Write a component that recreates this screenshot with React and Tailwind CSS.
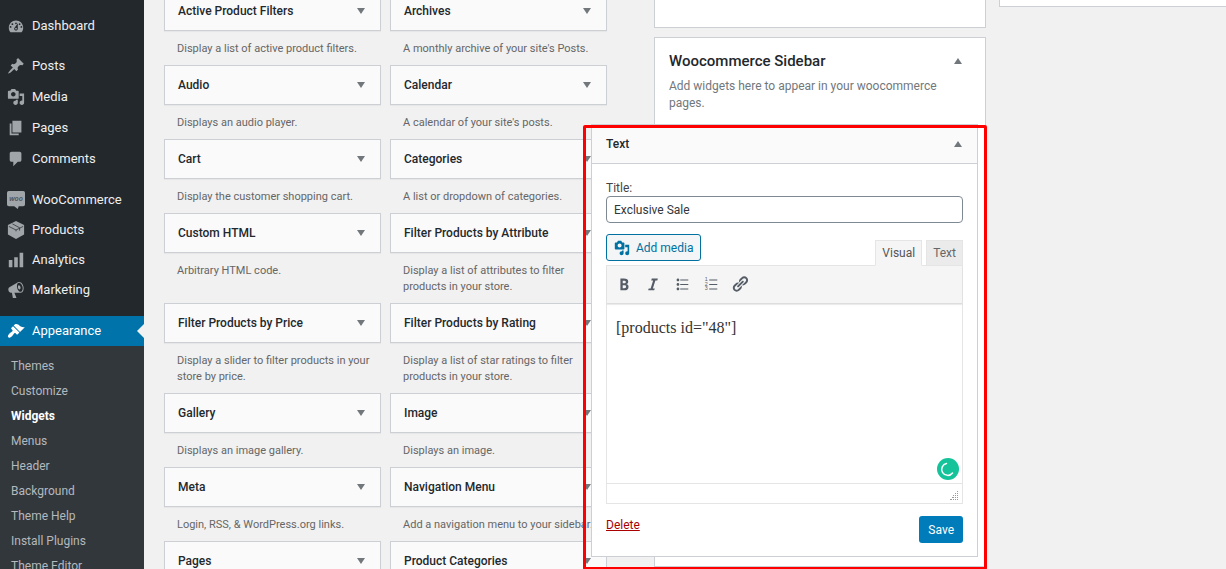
import React, { useState } from "react";

// Icons are drawn on a 20x20 grid
const ICONS = {
  dashboard:
    "M3.76 17h12.48c1.1-1.37 1.76-3.11 1.76-5 0-4.42-3.58-8-8-8s-8 3.58-8 8c0 1.89.66 3.63 1.76 5zM10 6c.55 0 1 .45 1 1s-.45 1-1 1-1-.45-1-1 .45-1 1-1zM6 7c.55 0 1 .45 1 1s-.45 1-1 1-1-.45-1-1 .45-1 1-1zm8 0c.55 0 1 .45 1 1s-.45 1-1 1-1-.45-1-1 .45-1 1-1zm-5.37 4.55L12 7v6c0 1.1-.9 2-2 2s-2-.9-2-2c0-.57.24-1.08.63-1.45zM4 10c.55 0 1 .45 1 1s-.45 1-1 1-1-.45-1-1 .45-1 1-1zm12 0c.55 0 1 .45 1 1s-.45 1-1 1-1-.45-1-1 .45-1 1-1zm-5 3c0-.55-.45-1-1-1s-1 .45-1 1 .45 1 1 1 1-.45 1-1z",
  pin: "M10.44 3.02l1.82-1.82 6.36 6.35-1.83 1.82c-1.05-.68-2.48-.57-3.41.36l-.75.75c-.92.93-1.04 2.35-.35 3.41l-1.83 1.82-2.41-2.41-2.8 2.79c-.42.42-3.38 2.71-3.8 2.29s1.86-3.39 2.28-3.81l2.79-2.79L4.1 9.36l1.83-1.82c1.05.69 2.48.57 3.4-.36l.75-.75c.93-.92 1.05-2.35.36-3.41z",
  media:
    "M13 11V4c0-.55-.45-1-1-1h-1.67L9 1H5L3.67 3H2c-.55 0-1 .45-1 1v7c0 .55.45 1 1 1h10c.55 0 1-.45 1-1zM7 4.5c1.38 0 2.5 1.12 2.5 2.5S8.38 9.5 7 9.5 4.5 8.38 4.5 7 5.62 4.5 7 4.5zM14 6h5v10.5c0 1.38-1.12 2.5-2.5 2.5S14 17.88 14 16.5s1.12-2.5 2.5-2.5c.17 0 .34.02.5.05V9h-3V6zm-4 8.05V13h2v3.5c0 1.38-1.12 2.5-2.5 2.5S7 17.88 7 16.5 8.12 14 9.5 14c.17 0 .34.02.5.05z",
  page: "M6 15V2h10v13H6zm-1 1h8v2H3V5h2v11z",
  comment:
    "M5 2h9c1.1 0 2 .9 2 2v7c0 1.1-.9 2-2 2h-2l-5 5v-5H5c-1.1 0-2-.9-2-2V4c0-1.1.9-2 2-2z",
  chart: "M18 18V2h-4v16h4zm-6 0V7H8v11h4zm-6 0v-8H2v8h4z",
  megaphone:
    "M18.15 5.94c.46 1.62.38 3.22-.02 4.48-.42 1.28-1.26 2.18-2.3 2.48-.16.06-.26.06-.4.06-.06.02-.12.02-.18.02-.06.02-.14.02-.22.02h-6.8l2.22 5.5c.02.14-.06.26-.14.34-.08.1-.24.16-.34.16H6.95c-.1 0-.26-.06-.34-.16-.08-.08-.16-.2-.14-.34l-1-5.5H4.25l-.02-.02c-.5.06-1.08-.18-1.54-.62s-.88-1.08-1.06-1.88c-.24-.8-.2-1.56-.02-2.2.18-.62.58-1.08 1.06-1.3l.02-.02 9-5.4c.1-.06.18-.1.24-.16.06-.04.14-.08.24-.12.16-.08.28-.12.5-.18 1.04-.3 2.24.1 3.22.98s1.84 2.24 2.26 3.86zm-2.58 5.98h-.02c.4-.1.74-.34 1.04-.7.58-.7.86-1.76.86-3.04 0-.64-.1-1.3-.28-1.98-.34-1.36-1.02-2.5-1.78-3.24s-1.68-1.1-2.46-.88c-.82.22-1.4.96-1.7 2-.32 1.04-.28 2.36.06 3.72.38 1.36 1 2.5 1.8 3.24.78.74 1.62 1.1 2.48.88zm-2.54-7.08c.22-.04.42-.02.62.04.38.16.76.48 1.02 1s.42 1.2.42 1.78c0 .3-.04.56-.12.8-.18.48-.44.84-.86.94-.34.1-.8-.06-1.14-.4s-.64-.86-.78-1.5c-.18-.62-.12-1.24.02-1.72s.48-.84.82-.94z",
  brush:
    "M14.48 11.06L7.41 3.99l1.5-1.5c.5-.56 2.3-.47 3.51.32 1.21.8 1.43 1.28 2.91 2.1 1.18.64 2.45 1.26 4.45.85zm-.71.71L6.7 4.7 4.93 6.47c-.39.39-.39 1.02 0 1.41l1.06 1.06c.39.39.39 1.03 0 1.42-.6.6-1.43 1.11-2.21 1.69-.35.26-.7.53-1.01.84C1.43 14.23.4 16.08 1.4 17.07c.99 1 2.84-.03 4.18-1.36.31-.31.58-.66.85-1.02.57-.78 1.08-1.61 1.69-2.21.39-.39 1.02-.39 1.41 0l1.06 1.06c.39.39 1.02.39 1.41 0z",
  bold: "M6 4v13h4.54c1.37 0 2.46-.33 3.26-1 .8-.66 1.2-1.58 1.2-2.77 0-.84-.17-1.51-.51-2.01s-.9-.85-1.67-1.03v-.09c.57-.1 1.02-.4 1.36-.9s.51-1.13.51-1.91c0-1.14-.39-1.98-1.17-2.5C12.75 4.26 11.5 4 9.78 4H6zm2.57 5.15V6.26h1.36c.73 0 1.27.11 1.61.32.34.22.51.58.51 1.07 0 .54-.16.92-.47 1.15s-.82.35-1.51.35h-1.5zm0 2.19h1.6c1.44 0 2.16.53 2.16 1.61 0 .6-.17 1.05-.51 1.34s-.86.43-1.57.43H8.57v-3.38z",
  italic: "M14.78 6h-2.13l-2.8 9h2.12l-.62 2H4.6l.62-2h2.14l2.8-9H8.03l.62-2h6.75z",
  bullets:
    "M5.5 7C4.67 7 4 6.33 4 5.5 4 4.68 4.67 4 5.5 4 6.32 4 7 4.68 7 5.5 7 6.33 6.32 7 5.5 7zM8 5h9v1H8V5zm-2.500 7c-.83 0-1.500-.67-1.500-1.500C4 9.680 4.670 9 5.500 9c.82 0 1.500.68 1.500 1.500 0 .83-.68 1.500-1.500 1.500zM8 10h9v1H8v-1zm-2.500 7c-.83 0-1.500-.67-1.500-1.500 0-.82.67-1.500 1.500-1.500.82 0 1.500.68 1.500 1.500 0 .83-.68 1.500-1.500 1.500zM8 15h9v1H8v-1z",
  link: "M17.74 2.76c1.68 1.69 1.68 4.41 0 6.1l-1.53 1.52c-1.12 1.12-2.7 1.47-4.14 1.09l2.62-2.61.76-.77.76-.76c.84-.84.84-2.2 0-3.04-.84-.85-2.2-.85-3.04 0l-.77.76-3.38 3.38c-.37-1.44-.02-3.02 1.1-4.14l1.52-1.53c1.69-1.68 4.42-1.68 6.1 0zM8.59 13.43l5.34-5.34c.42-.42.42-1.1 0-1.52-.44-.43-1.13-.39-1.53 0l-5.33 5.34c-.42.42-.42 1.1 0 1.52.44.43 1.13.39 1.52 0zm-.76 2.29l4.14-4.15c.38 1.44.03 3.02-1.09 4.14l-1.52 1.53c-1.69 1.68-4.41 1.68-6.1 0-1.68-1.68-1.68-4.42 0-6.1l1.53-1.52c1.12-1.12 2.7-1.47 4.14-1.1l-4.14 4.15c-.85.84-.85 2.2 0 3.05.84.84 2.2.84 3.04 0z",
};

const Icon = ({ name, className = "size-[18px]" }) => (
  <svg viewBox="0 0 20 20" fill="currentColor" className={`shrink-0 ${className}`} aria-hidden="true">
    <path d={ICONS[name]} />
  </svg>
);

const WooIcon = () => (
  <svg viewBox="0 0 20 20" className="size-[18px] shrink-0" aria-hidden="true">
    <path fill="currentColor" d="M2 0h16a2 2 0 0 1 2 2v13a2 2 0 0 1-2 2h-5l-1 3-4-3H2a2 2 0 0 1-2-2V2a2 2 0 0 1 2-2z" />
    <text x="10" y="11" textAnchor="middle" fontSize="8" fontWeight="600" fontStyle="italic" fontFamily="Open Sans, sans-serif" fill="#4a4f54">
      woo
    </text>
  </svg>
);

const BoxIcon = () => (
  <svg viewBox="0 0 20 20" className="size-[18px] shrink-0" aria-hidden="true">
    <path fill="currentColor" d="M10 0l9 4.500v10.500l-9 5-9-5V4.500z" />
    <path fill="none" stroke="#23282d" strokeWidth=".8" d="M2 6l8 4 8-4M6 3.200l8 4.300v3.200M10 10v1.500" />
  </svg>
);

const NumberedIcon = () => (
  <svg viewBox="0 0 20 20" fill="currentColor" className="size-[18px] shrink-0" aria-hidden="true">
    <path d="M8 5h9v1H8zM8 10h9v1H8zM8 15h9v1H8z" />
    <g fontSize="6" fontFamily="Liberation Sans, sans-serif">
      <text x="3" y="7">1</text>
      <text x="3" y="12">2</text>
      <text x="3" y="17">3</text>
    </g>
  </svg>
);

const Arrow = ({ up }) => (
  <svg viewBox="0 0 8 6" className="h-[6px] w-2 shrink-0 fill-[#72777c]" aria-hidden="true">
    <path d={up ? "M0 6l4-6 4 6z" : "M0 0h8L4 6z"} />
  </svg>
);

const CONTENT_MENU = [
  { label: "Posts", icon: <Icon name="pin" /> },
  { label: "Media", icon: <Icon name="media" /> },
  { label: "Pages", icon: <Icon name="page" /> },
  { label: "Comments", icon: <Icon name="comment" /> },
];

const STORE_MENU = [
  { label: "WooCommerce", icon: <WooIcon /> },
  { label: "Products", icon: <BoxIcon /> },
  { label: "Analytics", icon: <Icon name="chart" /> },
  { label: "Marketing", icon: <Icon name="megaphone" /> },
];

const SUBMENU = [
  "Themes",
  "Customize",
  "Widgets",
  "Menus",
  "Header",
  "Background",
  "Theme Help",
  "Install Plugins",
  "Theme Editor",
];

const WIDGETS = [
  ["Active Product Filters", "Display a list of active product filters."],
  ["Archives", "A monthly archive of your site's Posts."],
  ["Audio", "Displays an audio player."],
  ["Calendar", "A calendar of your site's posts."],
  ["Cart", "Display the customer shopping cart."],
  ["Categories", "A list or dropdown of categories."],
  ["Custom HTML", "Arbitrary HTML code."],
  ["Filter Products by Attribute", "Display a list of attributes to filter products in your store."],
  ["Filter Products by Price", "Display a slider to filter products in your store by price."],
  ["Filter Products by Rating", "Display a list of star ratings to filter products in your store."],
  ["Gallery", "Displays an image gallery."],
  ["Image", "Displays an image."],
  ["Meta", "Login, RSS, & WordPress.org links."],
  ["Navigation Menu", "Add a navigation menu to your sidebar."],
  ["Pages", "A list of your site's Pages."],
  ["Product Categories", "A list or dropdown of product categories."],
];

const MenuItem = ({ label, icon }) => (
  <a href="#" className="flex h-[30px] shrink-0 items-center gap-[7px] pl-[7px] text-[13px] text-[#eeeeee]">
    <span className="text-[#a0a5aa]">{icon}</span>
    {label}
  </a>
);

const AdminMenu = () => (
  <nav className="flex w-36 shrink-0 flex-col gap-[10px] bg-[#23282d] pt-[11px]">
    <MenuItem label="Dashboard" icon={<Icon name="dashboard" />} />
    <div className="flex flex-col gap-px">
      {CONTENT_MENU.map((item) => (
        <MenuItem key={item.label} {...item} />
      ))}
    </div>
    <div className="py-px">
      {STORE_MENU.map((item) => (
        <MenuItem key={item.label} {...item} />
      ))}
    </div>
    <div className="flex-1 bg-[#32373c]">
      <a href="#" className="relative flex h-[30px] items-center gap-[7px] bg-[#0073aa] pl-[7px] text-[13px] text-white">
        <Icon name="brush" />
        Appearance
        <span className="absolute right-0 border-y-[7px] border-r-[7px] border-y-transparent border-r-[#f1f1f1]" />
      </a>
      <ul className="pt-2">
        {SUBMENU.map((label) => (
          <li key={label}>
            <a
              href="#"
              className={`block pl-[11px] text-[12px] leading-[25px] ${
                label === "Widgets" ? "font-bold text-white" : "text-[#b4b9be]"
              }`}
            >
              {label}
            </a>
          </li>
        ))}
      </ul>
    </div>
  </nav>
);

const AvailableWidget = ({ title, description }) => (
  <div>
    <button
      type="button"
      className="flex h-10 w-full items-center justify-between border border-[#ccd0d4] bg-[#fafafa] pr-[15px] pl-[13px] text-[12px] font-medium text-[#23282d] shadow-[0_1px_1px_rgba(0,0,0,0.04)]"
    >
      {title}
      <Arrow />
    </button>
    <p className="pt-[10px] pr-1 pb-2 pl-[13px] text-[11px] leading-4 text-[#666666]">{description}</p>
  </div>
);

const ToolbarButton = ({ label, children }) => (
  <button type="button" aria-label={label} className="flex size-[18px] items-center justify-center">
    {children}
  </button>
);

const TextWidget = () => {
  const [title, setTitle] = useState("Exclusive Sale");
  const [content, setContent] = useState('[products id="48"]');

  return (
    <div className="relative z-10 -ml-[72px] border border-[#ccd0d4] bg-white">
      <button
        type="button"
        className="flex h-[39px] w-full items-center justify-between border-b border-[#ccd0d4] bg-[#fafafa] pr-[15px] pl-[14px] text-[12px] font-medium text-[#23282d]"
      >
        Text
        <Arrow up />
      </button>

      <form className="px-[14px] pt-4 pb-[13px]" onSubmit={(e) => e.preventDefault()}>
        <label htmlFor="widget-title" className="block text-[12px] leading-4 text-[#444444]">
          Title:
        </label>
        <input
          id="widget-title"
          type="text"
          value={title}
          onChange={(e) => setTitle(e.target.value)}
          className="block h-[27px] w-full rounded-[4px] border border-[#7e8993] bg-white px-[7px] text-[12px] text-[#32373c]"
        />

        <div className="mt-[11px] flex items-start justify-between">
          <button
            type="button"
            className="flex h-[27px] items-center gap-[6px] rounded-[3px] border border-[#0071a1] bg-[#f3f5f6] px-[7px] text-[12px] text-[#0071a1]"
          >
            <Icon name="media" className="size-4" />
            Add media
          </button>
          <div className="relative z-10 mt-[6px] -mb-px flex gap-1 text-[12px] text-[#555555]">
            <button type="button" className="h-[26px] border border-[#e5e5e5] border-b-[#f5f5f5] bg-[#f5f5f5] px-[6px]">
              Visual
            </button>
            <button type="button" className="h-[26px] border border-[#e5e5e5] bg-[#ebebeb] px-[6px] text-[#666666]">
              Text
            </button>
          </div>
        </div>

        <div className="relative border border-[#e5e5e5]">
          <div className="flex h-[38px] items-center gap-[11px] border-b border-[#dddddd] bg-[#f5f5f5] pb-[2px] pl-2 text-[#555d66] shadow-[0_1px_1px_rgba(0,0,0,0.08)]">
            <ToolbarButton label="Bold">
              <Icon name="bold" />
            </ToolbarButton>
            <ToolbarButton label="Italic">
              <Icon name="italic" />
            </ToolbarButton>
            <ToolbarButton label="Bulleted list">
              <Icon name="bullets" />
            </ToolbarButton>
            <ToolbarButton label="Numbered list">
              <NumberedIcon />
            </ToolbarButton>
            <ToolbarButton label="Insert link">
              <Icon name="link" />
            </ToolbarButton>
          </div>
          <textarea
            aria-label="Content"
            value={content}
            onChange={(e) => setContent(e.target.value)}
            className="block h-[179px] w-full resize-none px-[9px] py-3 font-['Liberation_Serif',serif] text-[16px] leading-6 text-[#333333]"
          />
          <div className="flex h-5 items-end justify-end border-t border-[#e5e5e5] p-[3px]">
            <svg viewBox="0 0 9 9" className="size-[9px] fill-[#999999]" aria-hidden="true">
              <path d="M7 0h1v1H7zM5 2h1v1H5zM7 2h1v1H7zM3 4h1v1H3zM5 4h1v1H5zM7 4h1v1H7zM2 6h1v1H2zM3 6h1v1H3zM5 6h1v1H5zM7 6h1v1H7zM0 8h2v1H0zM3 8h1v1H3zM5 8h1v1H5zM7 8h1v1H7z" />
            </svg>
          </div>
          {/* Grammar checker badge floating over the editor */}
          <svg viewBox="0 0 22 22" className="absolute right-[3px] bottom-[23px] size-[22px]" aria-hidden="true">
            <circle cx="11" cy="11" r="11" fill="#15c39a" />
            <path d="M9.500 5.500a6 6 0 1 0 6 9.500" fill="none" stroke="#ffffff" strokeWidth="1.500" strokeLinecap="round" />
          </svg>
        </div>

        <div className="mt-3 flex items-start justify-between">
          <a href="#" className="text-[12px] leading-[18px] text-[#aa0000] underline">
            Delete
          </a>
          <button type="submit" className="h-[27px] rounded-[3px] bg-[#007cba] px-[9px] text-[12px] text-white">
            Save
          </button>
        </div>
      </form>

      {/* Highlight frame around the open widget */}
      <div className="pointer-events-none absolute top-0 -right-[10px] -bottom-[14px] -left-[9px] rounded-[2px] border-[3px] border-[#ff0000]" />
    </div>
  );
};

export default function App() {
  return (
    <div className="flex h-screen overflow-hidden bg-[#f1f1f1] font-['Roboto','Open_Sans',sans-serif] text-[#444444]">
      <AdminMenu />

      {/* Page content, scrolled partway down the first row */}
      <main className="-mt-[9px] grid flex-1 grid-cols-[477fr_332fr_227fr] items-start gap-[13px] pl-5">
        <section className="mr-[34px] grid grid-cols-2 gap-x-[9px]">
          {WIDGETS.map(([title, description]) => (
            <AvailableWidget key={title} title={title} description={description} />
          ))}
        </section>

        <section className="flex min-w-0 flex-col gap-[9px]">
          <div className="h-[37px] border border-[#ccd0d4] bg-white" />
          <div className="border border-[#ccd0d4] bg-white pr-[7px] pb-[9px] pl-2">
            <div className="pt-[11px] pr-4 pb-3 pl-[6px]">
              <div className="flex items-center justify-between">
                <h2 className="text-[15px] leading-6 font-medium text-[#23282d]">Woocommerce Sidebar</h2>
                <Arrow up />
              </div>
              <p className="mt-[5px] pr-2 text-[12px] leading-[17px] text-[#72777c]">
                Add widgets here to appear in your woocommerce pages.
              </p>
            </div>
            <TextWidget />
          </div>
        </section>

        <section className="h-4 border border-r-0 border-[#ccd0d4] bg-white" />
      </main>
    </div>
  );
}
